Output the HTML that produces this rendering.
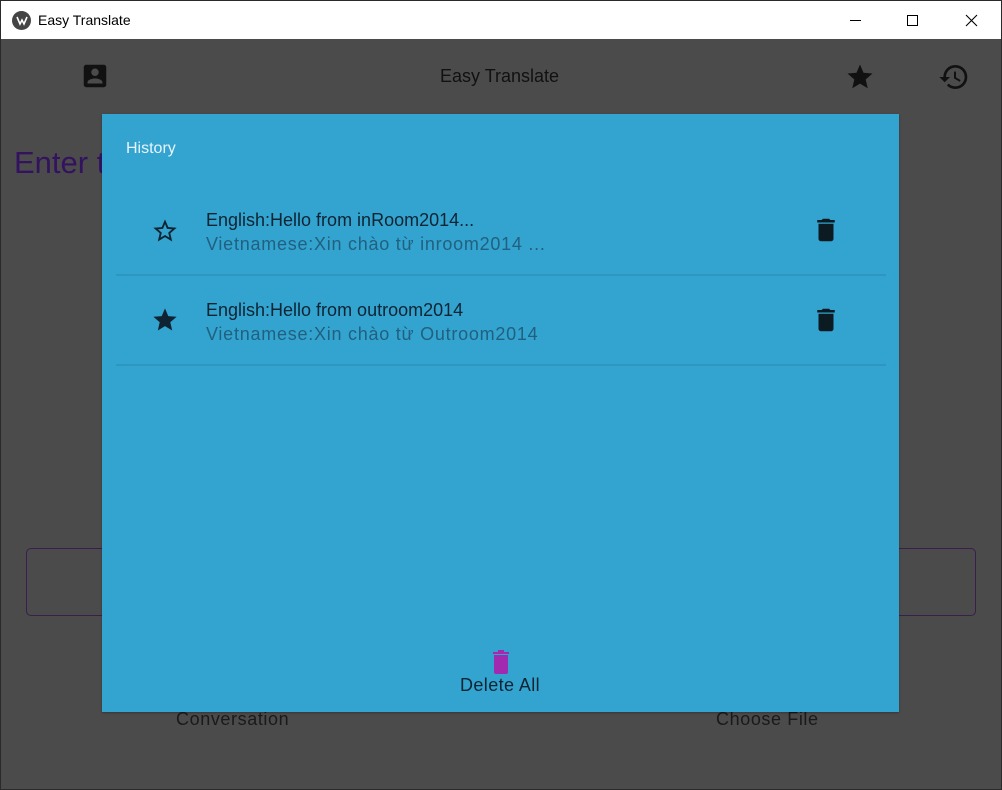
<!DOCTYPE html>
<html><head><meta charset="utf-8"><style>
*{margin:0;padding:0;box-sizing:border-box}
body{width:1002px;height:790px;overflow:hidden;font-family:"Liberation Sans",sans-serif;background:#4b4b4b;position:relative}
.abs{position:absolute}
#tb{left:0;top:0;width:1002px;height:39px;background:#fff;border:1px solid #333;border-bottom:none}
#frame{left:0;top:0;width:1002px;height:790px;border:1px solid #2a2a2a;pointer-events:none}
.t{white-space:nowrap}
#dlg{left:102px;top:114px;width:797px;height:598px;background:#33a4d0;box-shadow:0 1px 2px rgba(0,0,0,.3)}
.div{left:14px;width:770px;height:2px;background:#2e97c1}
.l1{font-size:18px;color:#0f2433}
.l2{font-size:18px;color:#21607f;letter-spacing:.75px}
</style></head><body>
<div id="tb" class="abs">
 <svg class="abs" style="left:11px;top:10px" width="19" height="19" viewBox="0 0 19 19"><circle cx="9.5" cy="9.5" r="9.5" fill="#444"/><path d="M5 6l3 7 2-4 2 4 3-7" stroke="#fff" stroke-width="1.6" fill="none"/></svg>
 <div class="abs t" style="left:37px;top:11px;font-size:14px;color:#000">Easy Translate</div>
 <div class="abs" style="left:849px;top:19px;width:11px;height:1px;background:#000"></div>
 <div class="abs" style="left:906px;top:14px;width:11px;height:11px;border:1px solid #000"></div>
 <svg class="abs" style="left:964px;top:13px" width="13" height="13"><path d="M1 1L12 12M12 1L1 12" stroke="#000" stroke-width="1.1"/></svg>
</div>
<svg class="abs" style="left:80px;top:61px" width="30" height="30" viewBox="0 0 24 24"><path fill="#111" d="M3 5v14a2 2 0 002 2h14a2 2 0 002-2V5a2 2 0 00-2-2H5a2 2 0 00-2 2zm12 4a3 3 0 11-6 0 3 3 0 016 0zm-9 8c0-2 4-3.1 6-3.1s6 1.1 6 3.1v1H6v-1z"/></svg>
<div class="abs t" style="left:440px;top:66px;font-size:18px;color:#111">Easy Translate</div>
<svg class="abs" style="left:845px;top:62px" width="30" height="30" viewBox="0 0 24 24"><path fill="#111" d="M12 17.27L18.18 21l-1.64-7.03L22 9.24l-7.19-.61L12 2 9.19 8.63 2 9.24l5.46 4.73L5.82 21z"/></svg>
<svg class="abs" style="left:938px;top:61px" width="32" height="32" viewBox="0 0 24 24"><path fill="#111" d="M13 3a9 9 0 00-9 9H1l3.89 3.89.07.14L9 12H6c0-3.87 3.13-7 7-7s7 3.13 7 7-3.13 7-7 7c-1.93 0-3.68-.79-4.94-2.06l-1.42 1.42A8.95 8.95 0 0013 21a9 9 0 000-18zm-1 5v5l4.28 2.54.72-1.21-3.5-2.08V8H12z"/></svg>
<div class="abs t" style="left:14px;top:145px;font-size:31px;color:#33125f">Enter text</div>
<div class="abs" style="left:26px;top:548px;width:950px;height:68px;border:1.5px solid #3a1e4e;border-radius:5px"></div>
<div class="abs t" style="left:176px;top:709px;font-size:18px;color:#1a1a1a;letter-spacing:.6px">Conversation</div>
<div class="abs t" style="left:716px;top:709px;font-size:18px;color:#1a1a1a;letter-spacing:.6px">Choose File</div>
<div id="dlg" class="abs">
 <div class="abs t" style="left:24px;top:26px;font-size:16px;color:#e8f4fa">History</div>
 <svg class="abs" style="left:49px;top:103px" width="28" height="28" viewBox="0 0 24 24"><path fill="#0f2433" d="M22 9.24l-7.19-.62L12 2 9.19 8.63 2 9.24l5.46 4.73L5.82 21 12 17.27 18.18 21l-1.63-7.03L22 9.24zM12 15.4l-3.76 2.27 1-4.28-3.32-2.88 4.38-.38L12 6.1l1.71 4.04 4.38.38-3.32 2.88 1 4.28L12 15.4z"/></svg>
 <div class="abs t l1" style="left:104px;top:96px">English:Hello from inRoom2014...</div>
 <div class="abs t l2" style="left:104px;top:120px">Vietnamese:Xin chào từ inroom2014 ...</div>
 <svg class="abs" style="left:709px;top:100px" width="30" height="32" viewBox="0 0 24 24"><path fill="#0c1a22" d="M6 19c0 1.1.9 2 2 2h8c1.1 0 2-.9 2-2V7H6v12zM19 4h-3.5l-1-1h-5l-1 1H5v2h14V4z"/></svg>
 <div class="abs div" style="top:160px"></div>
 <svg class="abs" style="left:49px;top:192px" width="28" height="28" viewBox="0 0 24 24"><path fill="#0f2433" d="M12 17.27L18.18 21l-1.64-7.03L22 9.24l-7.19-.61L12 2 9.19 8.63 2 9.24l5.46 4.73L5.82 21z"/></svg>
 <div class="abs t l1" style="left:104px;top:186px">English:Hello from outroom2014</div>
 <div class="abs t l2" style="left:104px;top:210px">Vietnamese:Xin chào từ Outroom2014</div>
 <svg class="abs" style="left:709px;top:190px" width="30" height="32" viewBox="0 0 24 24"><path fill="#0c1a22" d="M6 19c0 1.1.9 2 2 2h8c1.1 0 2-.9 2-2V7H6v12zM19 4h-3.5l-1-1h-5l-1 1H5v2h14V4z"/></svg>
 <div class="abs div" style="top:250px"></div>
 <svg class="abs" style="left:387px;top:534px" width="24" height="28" viewBox="0 0 24 28"><path fill="#a22ab0" d="M5 7h14v17a2 2 0 01-2 2H7a2 2 0 01-2-2V7zM4 4h16v2H4zM9 2h6v2H9z"/></svg>
 <div class="abs t" style="left:358px;top:561px;font-size:18px;color:#0f2433;letter-spacing:.4px">Delete All</div>
</div>
<div id="frame" class="abs"></div>
</body></html>
